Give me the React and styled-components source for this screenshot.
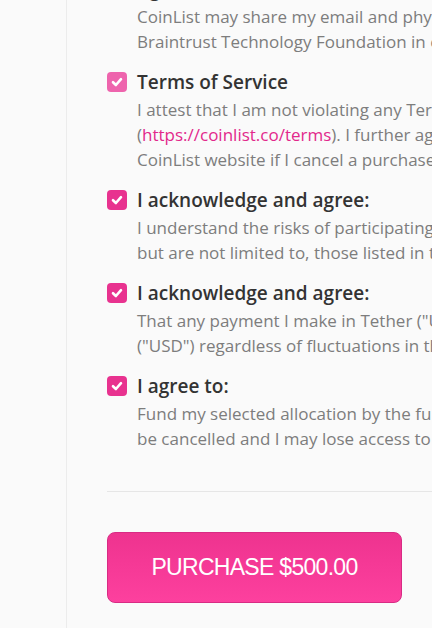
import React from 'react';
import styled, { createGlobalStyle } from 'styled-components';

const GlobalStyle = createGlobalStyle`
  html, body {
    margin: 0;
    padding: 0;
    background: #fafafa;
    overflow: hidden;
  }
  body {
    font-family: "Open Sans", "Noto Sans", sans-serif;
  }
`;

const Page = styled.div`
  display: flex;
  width: 432px;
  height: 628px;
  overflow: hidden;
  background: #fafafa;
`;

const Side = styled.div`
  flex: 0 0 66px;
  border-right: 1px solid #ececec;
`;

const Main = styled.div`
  flex: 1;
  min-width: 0;
  padding-left: 40px;
  display: flex;
  flex-direction: column;
`;

const List = styled.div`
  margin-top: -25px;
  display: flex;
  flex-direction: column;
  gap: 14px;
`;

const Item = styled.div`
  display: flex;
  flex-direction: column;
`;

const Head = styled.div`
  display: flex;
  align-items: center;
  gap: 10px;
  height: 28px;
`;

const Box = styled.div`
  flex: 0 0 20px;
  width: 20px;
  height: 20px;
  border-radius: 4px;
  background: ${p => (p.$faded ? '#ee64ad' : '#e8328f')};
  display: flex;
  align-items: center;
  justify-content: center;
`;

const Title = styled.div`
  font-size: 19px;
  font-weight: 600;
  color: #333333;
  white-space: nowrap;
`;

const Desc = styled.div`
  margin-top: 1px;
  padding-left: 30px;
  font-size: 17px;
  line-height: 25px;
  color: #7d7d7d;
`;

const Line = styled.div`
  white-space: nowrap;
`;

const Link = styled.a`
  color: #e2288b;
  text-decoration: none;
`;

const Divider = styled.div`
  margin-top: 40px;
  height: 1px;
  background: #e6e6e6;
`;

const Purchase = styled.button`
  margin-top: 40px;
  width: 295px;
  height: 71px;
  border: 1px solid #d82b84;
  border-radius: 8px;
  background: linear-gradient(#ee338f, #fd409e);
  color: #ffffff;
  font-family: "Liberation Sans", Arial, sans-serif;
  font-size: 23px;
  letter-spacing: -0.7px;
  cursor: pointer;
`;

const items = [
  {
    title: 'Agree to share data:',
    lines: [
      'CoinList may share my email and physical address with the',
      'Braintrust Technology Foundation in connection with this sale.',
    ],
  },
  {
    title: 'Terms of Service',
    faded: true,
    lines: [
      'I attest that I am not violating any Terms of Service',
      <>(<Link href="#">https://coinlist.co/terms</Link>). I further agree I may be banned from the</>,
      'CoinList website if I cancel a purchase after the deadline.',
    ],
  },
  {
    title: 'I acknowledge and agree:',
    lines: [
      'I understand the risks of participating in this token sale, including,',
      'but are not limited to, those listed in the risk factors.',
    ],
  },
  {
    title: 'I acknowledge and agree:',
    lines: [
      'That any payment I make in Tether ("USDT") will be valued in US Dollars',
      '("USD") regardless of fluctuations in the value of USDT.',
    ],
  },
  {
    title: 'I agree to:',
    lines: [
      'Fund my selected allocation by the funding deadline or my purchase will',
      'be cancelled and I may lose access to future sales.',
    ],
  },
];

function Check({ faded }) {
  return (
    <Box $faded={faded}>
      <svg width="14" height="14" viewBox="0 0 14 14">
        <path d="M3 7.2 L5.9 10 L11 4.2" fill="none" stroke="#fff" strokeWidth="2.6" strokeLinecap="round" strokeLinejoin="round" />
      </svg>
    </Box>
  );
}

export default function App() {
  return (
    <Page>
      <GlobalStyle />
      <Side />
      <Main>
        <List>
          {items.map((item, i) => (
            <Item key={i}>
              <Head>
                <Check faded={item.faded} />
                <Title>{item.title}</Title>
              </Head>
              <Desc>
                {item.lines.map((line, j) => (
                  <Line key={j}>{line}</Line>
                ))}
              </Desc>
            </Item>
          ))}
        </List>
        <Divider />
        <Purchase>PURCHASE $500.00</Purchase>
      </Main>
    </Page>
  );
}
